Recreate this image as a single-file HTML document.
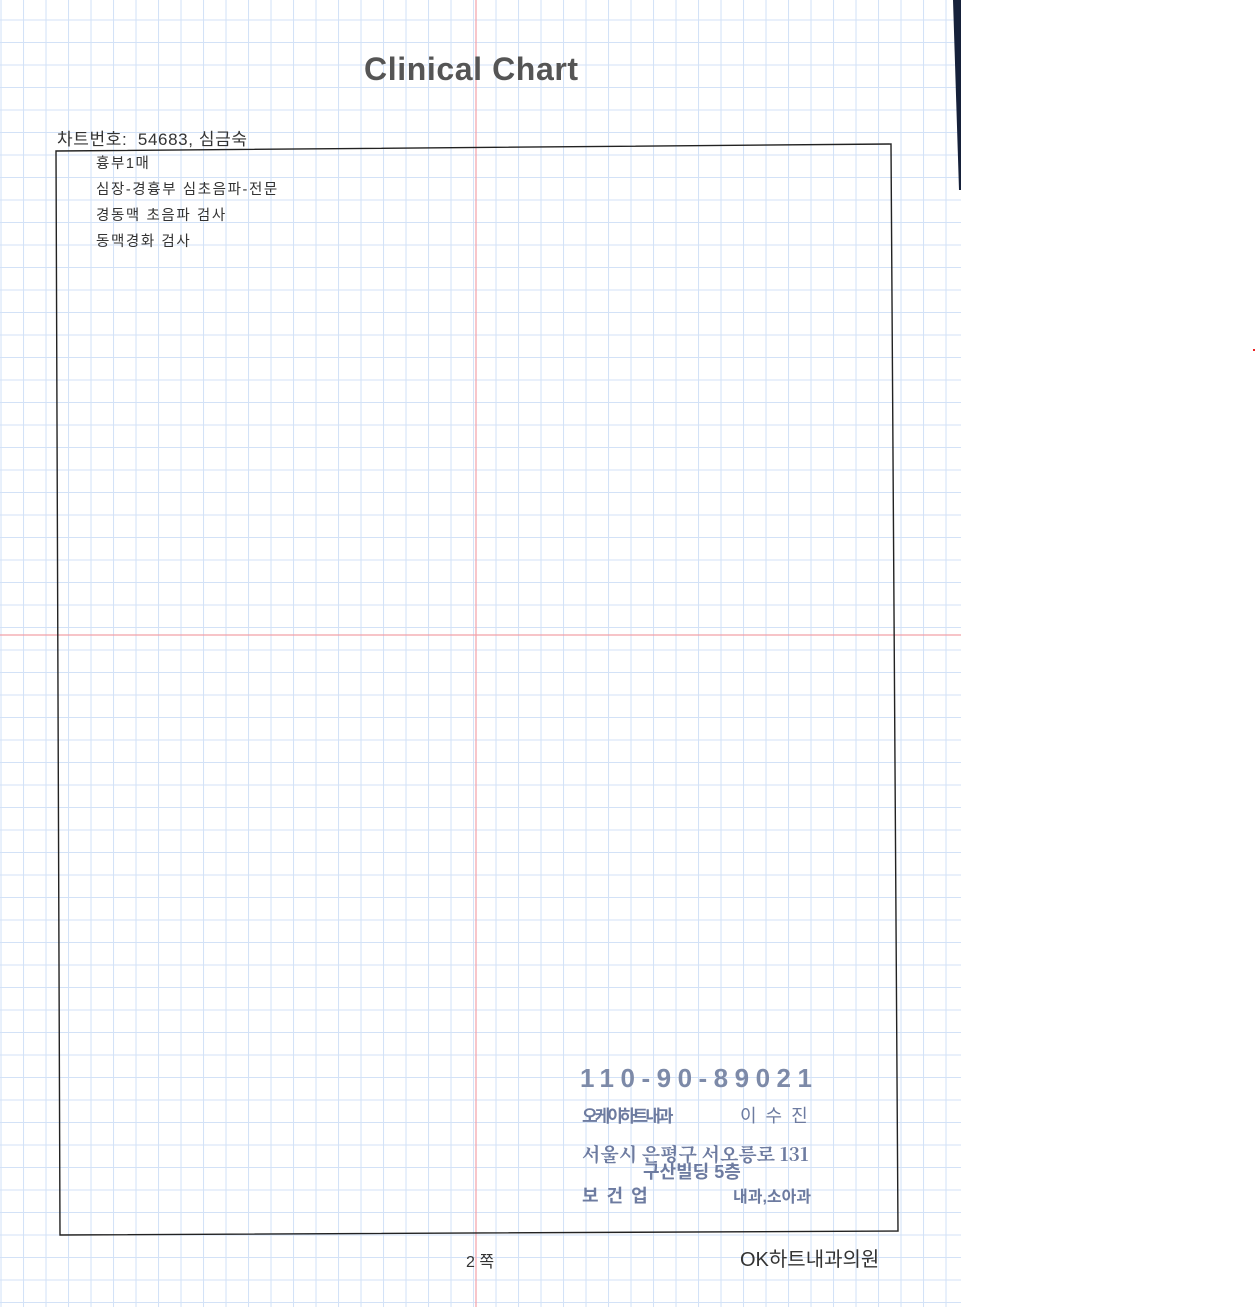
<!DOCTYPE html>
<html><head><meta charset="utf-8"><style>
body{margin:0;width:1257px;height:1307px;background:#fff;position:relative;overflow:hidden;font-family:"Liberation Sans","Noto Sans CJK KR",sans-serif}
.t{position:absolute;white-space:nowrap}
</style></head><body>
<svg width="1257" height="1307" style="position:absolute;left:0;top:0">
<defs><pattern id="g" x="0.5" y="-3" width="22.5" height="22.5" patternUnits="userSpaceOnUse">
<path d="M0.5 0V22.5M0 0.5H22.5" stroke="#d3e2f7" stroke-width="1.1" fill="none"/></pattern></defs>
<rect x="0" y="0" width="961" height="1307" fill="url(#g)"/>
<line x1="476" y1="0" x2="476" y2="1307" stroke="#f2a0a8" stroke-width="1.2"/>
<line x1="0" y1="635" x2="961" y2="635" stroke="#f2a0a8" stroke-width="1.2"/>
<polygon points="56,151 891,144 898,1231 60,1235" fill="none" stroke="#222" stroke-width="1.4"/>
<polygon points="953,0 961,0 961,190 959,190" fill="#16213a"/>
<rect x="1253" y="349" width="2" height="2" fill="#e22"/>
</svg>
<div class="t" style="left:364px;top:51px;font-size:32px;font-weight:bold;color:#555;letter-spacing:0.6px">Clinical Chart</div>
<div class="t" style="left:57px;top:125px;font-size:17px;color:#333;letter-spacing:0.6px">차트번호:&nbsp; 54683, 심금숙</div>
<div class="t" style="left:96px;top:151px;font-size:14.5px;color:#333;line-height:26px;letter-spacing:1.6px">흉부1매<br>심장-경흉부 심초음파-전문<br>경동맥 초음파 검사<br>동맥경화 검사</div>
<div class="t" style="left:580px;top:1063px;font-size:26px;font-weight:bold;color:#7d8aa8;letter-spacing:6.5px">110-90-89021</div>
<div class="t" style="left:582px;top:1102px;font-size:17px;font-weight:bold;color:#6d7ba0;letter-spacing:-3px">오케이하트내과</div>
<div class="t" style="left:740px;top:1102px;font-size:18px;color:#6d7ba0;letter-spacing:9px">이수진</div>
<div class="t" style="left:582px;top:1140px;font-size:19px;font-weight:bold;color:#6d7ba0;font-family:'Noto Serif CJK SC','Liberation Serif',serif">서울시 은평구 서오릉로 131</div>
<div class="t" style="left:643px;top:1158px;font-size:18px;font-weight:bold;color:#6d7ba0">구산빌딩 5층</div>
<div class="t" style="left:582px;top:1182px;font-size:18px;font-weight:bold;color:#6d7ba0;letter-spacing:8px">보건업</div>
<div class="t" style="left:733px;top:1183px;font-size:16px;font-weight:bold;color:#6d7ba0;letter-spacing:0px">내과,소아과</div>
<div class="t" style="left:466px;top:1248px;font-size:16px;color:#333">2 쪽</div>
<div class="t" style="left:740px;top:1243px;font-size:20px;color:#333">OK하트내과의원</div>
</body></html>
